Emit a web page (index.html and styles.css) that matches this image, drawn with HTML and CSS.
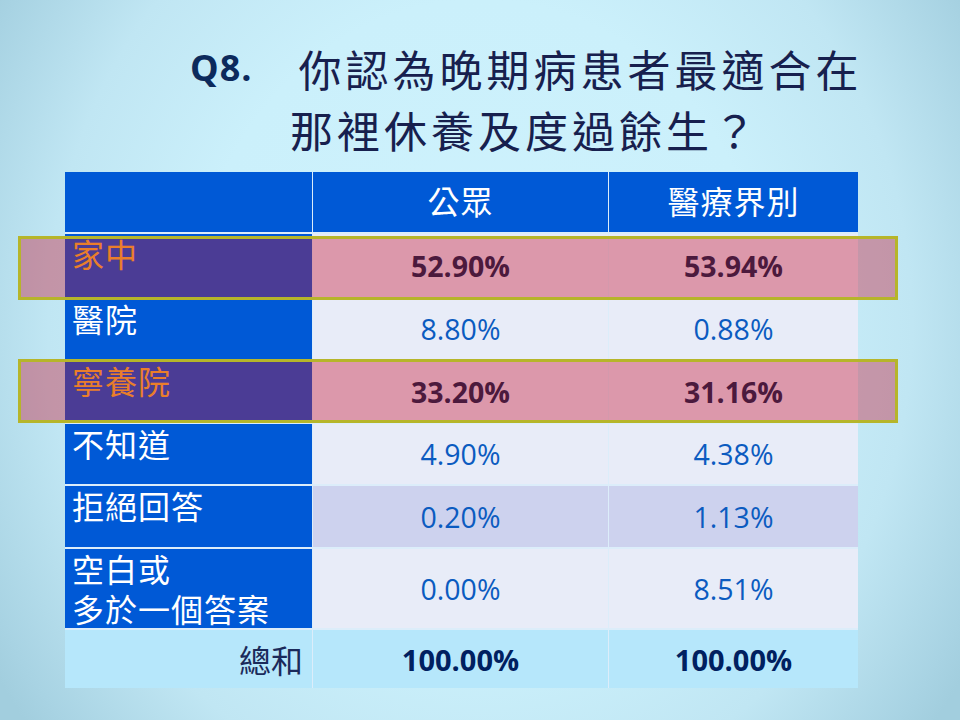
FILE: index.html
```html
<!DOCTYPE html>
<html lang="zh-Hant">
<head>
<meta charset="utf-8">
<title>Q8</title>
<link rel="stylesheet" href="styles.css">
</head>
<body>
<div class="slide">
  <div class="title">
    <div class="line line1"><span class="qno">Q8.</span><span class="qtext">你認為晚期病患者最適合在</span></div>
    <div class="line line2"><span class="qtext">那裡休養及度過餘生？</span></div>
  </div>
  <div class="table">
    <div class="cell head"></div>
    <div class="cell head center">公眾</div>
    <div class="cell head center">醫療界別</div>

    <div class="cell label gold">家中</div>
    <div class="cell val light strong">52.90%</div>
    <div class="cell val light strong">53.94%</div>

    <div class="cell label">醫院</div>
    <div class="cell val light">8.80%</div>
    <div class="cell val light">0.88%</div>

    <div class="cell label gold">寧養院</div>
    <div class="cell val light strong">33.20%</div>
    <div class="cell val light strong">31.16%</div>

    <div class="cell label">不知道</div>
    <div class="cell val light">4.90%</div>
    <div class="cell val light">4.38%</div>

    <div class="cell label">拒絕回答</div>
    <div class="cell val band">0.20%</div>
    <div class="cell val band">1.13%</div>

    <div class="cell label"><span class="ln">空白或</span><span class="ln ln2">多於一個答案</span></div>
    <div class="cell val light">0.00%</div>
    <div class="cell val light">8.51%</div>

    <div class="cell total-label">總和</div>
    <div class="cell val total">100.00%</div>
    <div class="cell val total">100.00%</div>
  </div>
  <div class="hl hl1"></div>
  <div class="hl hl2"></div>
</div>
</body>
</html>
```
FILE: styles.css
```css
html, body {
  margin: 0;
  padding: 0;
}
body {
  width: 960px;
  height: 720px;
  overflow: hidden;
  background: radial-gradient(60% 90% at 50% 45%, #cef2fd 0%, #cbf0fb 50%, #c0e6f3 75%, #a8d3e3 95%, #a2cede 100%);
  font-family: "Noto Sans CJK TC", "Noto Sans", sans-serif;
}
.slide {
  position: relative;
  width: 960px;
  height: 720px;
  padding-top: 38px;
  box-sizing: border-box;
}
.title {
  color: #17204e;
}
.line {
  display: flex;
  align-items: center;
  height: 60px;
}
.line1 {
  padding-left: 190px;
}
.line2 {
  padding-left: 290px;
  margin-top: 1px;
}
.qno {
  font-family: "Open Sans", "Liberation Sans", sans-serif;
  font-weight: 700;
  font-size: 36px;
  line-height: 1;
  letter-spacing: 1px;
  color: #0c2a5c;
  margin-right: 46px;
}
.qtext {
  font-family: "Noto Sans CJK TC", sans-serif;
  font-size: 43px;
  line-height: 60px;
  letter-spacing: 4px;
}
.table {
  margin-top: 13px;
  margin-left: 65px;
  width: 793px;
  display: grid;
  grid-template-columns: 247px 295px 249px;
  grid-template-rows: 60px 63px 60px 61px 60px 61px 79px 58px;
  column-gap: 1px;
  row-gap: 2px;
  background: #dcedfa;
}
.cell {
  box-sizing: border-box;
}
.head {
  background: #0059d6;
  color: #ffffff;
  font-size: 32px;
  letter-spacing: 1px;
  display: flex;
  align-items: center;
  justify-content: center;
  padding-bottom: 4px;
}
.label {
  background: #0059d6;
  color: #ffffff;
  font-size: 32px;
  line-height: 32px;
  letter-spacing: 1px;
  padding-left: 7px;
  padding-top: 3px;
}
.ln {
  display: block;
}
.ln2 {
  margin-top: 8px;
}
.label.gold {
  color: #ffc22b;
}
.val {
  display: flex;
  align-items: center;
  justify-content: center;
  font-family: "Open Sans", "Liberation Sans", sans-serif;
  font-size: 28.5px;
  color: #0b5bc0;
}
.light {
  background: #e8ecf8;
}
.band {
  background: #cdd2ee;
}
.strong {
  font-weight: 700;
  color: #002248;
}
.total {
  background: #b6e7fb;
  font-weight: 700;
  font-size: 29px;
  color: #002060;
}
.total-label {
  background: #b6e7fb;
  color: #1b2a5a;
  font-size: 32px;
  display: flex;
  align-items: center;
  justify-content: flex-end;
  padding-right: 9px;
}
.hl {
  position: absolute;
  left: 18px;
  width: 880px;
  height: 64px;
  box-sizing: border-box;
  border: 3px solid #b6b52a;
  background: rgba(200, 14, 43, 0.375);
}
.hl1 {
  top: 236px;
}
.hl2 {
  top: 359px;
}
```
